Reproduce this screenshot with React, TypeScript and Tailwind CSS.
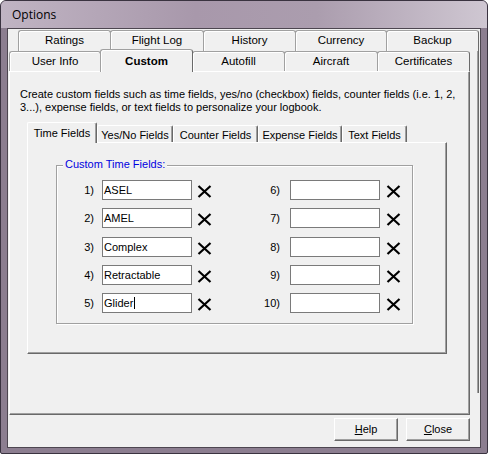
import React from "react";

const backTabs = [
  { label: "Ratings", cls: "w-[93px]" },
  { label: "Flight Log", cls: "w-[94px] -ml-[1px]" },
  { label: "History", cls: "w-[93px] -ml-[1px]" },
  { label: "Currency", cls: "w-[92px] -ml-[1px]" },
  { label: "Backup", cls: "w-[93px] -ml-[1px]" },
];

const frontTabs = [
  { label: "User Info", cls: "w-[92px]" },
  { label: "Custom", cls: "w-[93px] -ml-[1px]", active: true },
  { label: "Autofill", cls: "w-[93px] -ml-[1px]" },
  { label: "Aircraft", cls: "w-[94px] -ml-[1px]" },
  { label: "Certificates", cls: "w-[93px] -ml-[1px]" },
];

const innerTabs = [
  { label: "Time Fields", cls: "w-[70px]", active: true },
  { label: "Yes/No Fields", cls: "w-[76px]" },
  { label: "Counter Fields", cls: "w-[85px]" },
  { label: "Expense Fields", cls: "w-[84px]" },
  { label: "Text Fields", cls: "w-[65px]" },
];

const rows = [
  { a: "1)", av: "ASEL", b: "6)", gap: "" },
  { a: "2)", av: "AMEL", b: "7)", gap: "mt-[8px]" },
  { a: "3)", av: "Complex", b: "8)", gap: "mt-[9px]" },
  { a: "4)", av: "Retractable", b: "9)", gap: "mt-[8px]" },
  { a: "5)", av: "Glider", b: "10)", gap: "mt-[8px]", caret: true },
];

function Cross() {
  return (
    <svg width="15" height="13" viewBox="0 0 15 13" className="mt-[5px] shrink-0">
      <path d="M1.5 1 L13.5 12 M13.5 1 L1.5 12" stroke="#000" strokeWidth="2.2" fill="none" />
    </svg>
  );
}

function Field({ value, caret }: { value?: string; caret?: boolean }) {
  return (
    <div className="flex h-[20px] w-[90px] items-center border border-[#7a7a7a] bg-white pl-[1px] leading-[13px]">
      {value}
      {caret && <span className="ml-[1px] inline-block h-[12px] w-px bg-black" />}
    </div>
  );
}

export default function App() {
  return (
    <div className="h-[454px] w-[488px] overflow-hidden rounded-t-[6px] rounded-b-[2px] border border-[#3a3340] bg-[#8c7e90] font-[Liberation_Sans,Arial,sans-serif] text-[11px] text-black">
      {/* title bar */}
      <div className="flex h-[27px] items-center bg-[linear-gradient(90deg,#c0b4c3_0%,#a898ab_40%,#ab9dae_65%,#cfc7d2_100%)] pl-[11px] font-[Open_Sans,Noto_Sans,sans-serif] text-[12px]">
        Options
      </div>

      <div className="px-[6px] pb-[5px]">
        <div className="flex h-[420px] flex-col border border-[#4d4650] bg-[#f0f0f0]">
          {/* back tab row */}
          <div className="ml-[10px] mt-[1px] flex h-[21px] text-[11.5px]">
            {backTabs.map((t) => (
              <div
                key={t.label}
                className={`flex h-[21px] items-center justify-center rounded-t-[3px] border-x border-t border-[#a0a0a0] border-r-[#6a6a6a] bg-[#f0f0f0] shadow-[inset_1px_1px_0_#fff] ${t.cls}`}
              >
                {t.label}
              </div>
            ))}
          </div>

          <div className="flex">
            <div className="ml-[1px] w-[461px]">
              {/* front tab row */}
              <div className="flex h-[20px] items-start text-[11.5px]">
                {frontTabs.map((t) =>
                  t.active ? (
                    <div
                      key={t.label}
                      className={`relative z-10 -mt-[2px] flex h-[23px] items-center justify-center rounded-t-[3px] border-x border-t border-[#a0a0a0] border-r-[#6a6a6a] bg-[#f0f0f0] pt-[1px] font-bold shadow-[inset_1px_1px_0_#fff] ${t.cls}`}
                    >
                      {t.label}
                    </div>
                  ) : (
                    <div
                      key={t.label}
                      className={`flex h-[20px] items-center justify-center rounded-t-[3px] border-x border-t border-[#a0a0a0] border-r-[#6a6a6a] bg-[#f0f0f0] shadow-[inset_1px_1px_0_#fff] ${t.cls}`}
                    >
                      {t.label}
                    </div>
                  )
                )}
              </div>

              {/* main panel */}
              <div className="h-[344px] border-b border-l border-r border-t border-white border-b-[#696969] border-r-[#696969] pl-[10px] pt-[16px] shadow-[inset_-1px_-1px_0_#a0a0a0]">
                <p className="whitespace-nowrap leading-[13px]">
                  Create custom fields such as time fields, yes/no (checkbox) fields, counter fields (i.e. 1, 2,
                  <br />
                  3...), expense fields, or text fields to personalize your logbook.
                </p>

                <div className="ml-[7px] mt-[8px]">
                  <div className="flex h-[20px] items-start">
                    {innerTabs.map((t) =>
                      t.active ? (
                        <div
                          key={t.label}
                          className={`relative z-10 flex h-[21px] items-center justify-center rounded-t-[2px] border-l border-r border-t border-white border-r-[#696969] bg-[#f0f0f0] shadow-[inset_-1px_0_0_#a0a0a0] ${t.cls}`}
                        >
                          {t.label}
                        </div>
                      ) : (
                        <div
                          key={t.label}
                          className={`mt-[3px] flex h-[17px] items-center justify-center rounded-t-[2px] border-l border-r border-t border-white border-r-[#696969] pt-[2px] shadow-[inset_-1px_0_0_#a0a0a0] ${t.cls}`}
                        >
                          {t.label}
                        </div>
                      )
                    )}
                  </div>

                  <div className="h-[212px] w-[420px] border border-white border-b-[#696969] border-r-[#696969] pl-[28px] pt-[22px] shadow-[inset_-1px_-1px_0_#a0a0a0]">
                    <div className="w-[357px] border border-[#a0a0a0] pb-[10px] shadow-[1px_1px_0_#fff,inset_1px_1px_0_#fff]">
                      <span className="-mt-[8px] ml-[6px] block w-fit bg-[#f0f0f0] px-[2px] leading-[13px] text-[#0000e0]">
                        Custom Time Fields:
                      </span>
                      <div className="mt-[9px] flex flex-col">
                        {rows.map((r) => (
                          <div key={r.a} className={`flex h-[20px] items-start ${r.gap}`}>
                            <span className="w-[37px] text-right leading-[20px]">{r.a}</span>
                            <div className="ml-[8px]">
                              <Field value={r.av} caret={r.caret} />
                            </div>
                            <div className="ml-[5px] flex">
                              <Cross />
                            </div>
                            <span className="w-[68px] text-right leading-[20px]">{r.b}</span>
                            <div className="ml-[10px]">
                              <Field />
                            </div>
                            <div className="ml-[6px] flex">
                              <Cross />
                            </div>
                          </div>
                        ))}
                      </div>
                    </div>
                  </div>
                </div>
              </div>
            </div>

            {/* back-row edge continuing down */}
            <div className="ml-[7px] h-[342px] w-[2px] border-r border-[#696969] bg-[#a0a0a0]" />
          </div>

          {/* buttons */}
          <div className="mt-[3px] flex justify-end gap-[8px] pr-[10px]">
            <button className="h-[23px] w-[64px] border border-white border-b-[#696969] border-r-[#696969] bg-[#f0f0f0] leading-[13px] shadow-[inset_-1px_-1px_0_#a0a0a0]">
              <span className="underline">H</span>elp
            </button>
            <button className="h-[23px] w-[64px] border border-white border-b-[#696969] border-r-[#696969] bg-[#f0f0f0] leading-[13px] shadow-[inset_-1px_-1px_0_#a0a0a0]">
              <span className="underline">C</span>lose
            </button>
          </div>
        </div>
      </div>
    </div>
  );
}
